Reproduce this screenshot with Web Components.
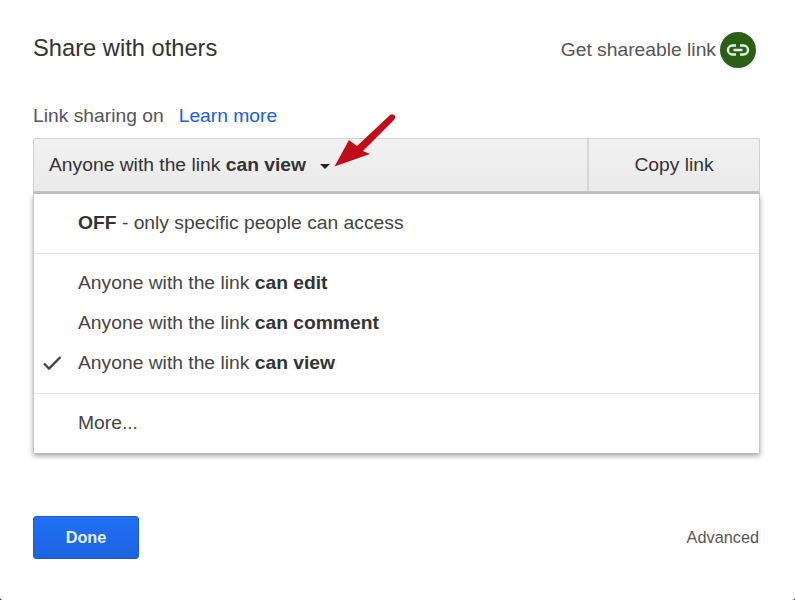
<!DOCTYPE html>
<html><head><meta charset="utf-8"><title>Share with others</title>
<style>
html,body{margin:0;padding:0;height:600px;overflow:hidden;background:#fff}
</style></head><body>
<share-dialog></share-dialog>
<template id="t-dialog">
<style>
:host{display:block;width:795px;height:600px;background:#333;font-family:"Liberation Sans",Arial,sans-serif;color:#333}
.d{box-sizing:border-box;height:600px;background:#fff;border-radius:0 0 3px 3px;padding:35px 35px 41px 33px;display:flex;flex-direction:column;position:relative}
.head{display:flex;justify-content:space-between;align-items:flex-start;height:69px}
h1{margin:-1px 0 0;font-weight:400;font-size:23.7px;line-height:28px;color:#333}
.get{display:flex;align-items:center;gap:4px;font-size:19.27px;color:#555;margin-top:-3px;margin-right:4px}
.line{font-size:19.27px;line-height:24px;color:#555;display:flex;gap:15px}
.line a{color:#1a5fdc;text-decoration:none}
.bar{margin-top:10px;display:flex;height:56px;box-sizing:border-box;border:1px solid #d0d0d0;border-bottom:3px solid #c4c4c4;background:linear-gradient(#f1f1f1,#eaeaea);border-radius:2px 2px 0 0}
.sel{flex:1;display:flex;align-items:center;padding-left:15px;font-size:19.27px;color:#333;border-right:2px solid #d6d6d6}
.caret{width:0;height:0;border:5px solid transparent;border-top:5px solid #222;border-bottom:0;margin-left:14px;margin-top:3px}
.copy{width:170px;display:flex;align-items:center;justify-content:center;font-size:19.27px;color:#333}
b{font-weight:700}
.foot{margin-top:auto;display:flex;justify-content:space-between;align-items:center;margin-right:1px}
.adv{font-size:16.3px;color:#555}
.arrow{position:absolute;left:330px;top:110px}
</style>
<div class="d">
  <div class="head"><h1>Share with others</h1><div class="get"><span>Get shareable link</span><link-badge></link-badge></div></div>
  <div class="line"><span>Link sharing on</span><a>Learn more</a></div>
  <div class="bar"><div class="sel"><span>Anyone with the link <b>can view</b></span><i class="caret"></i></div><div class="copy">Copy link</div></div>
  <share-menu></share-menu>
  <div class="foot"><done-button></done-button><span class="adv">Advanced</span></div>
  <svg class="arrow" width="70" height="60" viewBox="0 0 70 60"><path d="M4.500 56.500 L19 30 L27 36 L60 5 Q63 3 65 6 Q66 8 63 11 L33 41 L40 44 Z" fill="#c00d1a"/></svg>
</div>
</template>
<template id="t-badge">
<style>:host{display:block;width:36px;height:36px}svg{display:block}</style>
<svg width="36" height="36" viewBox="0 0 36 36"><circle cx="18" cy="18" r="18" fill="#2a5f16"/><path d="M16 13.500h-3.500a4.500 4.500 0 0 0 0 9H16M20 13.500h3.500a4.500 4.500 0 0 1 0 9H20M13.500 18h9" fill="none" stroke="#e8efe4" stroke-width="2.400"/></svg>
</template>
<template id="t-menu">
<style>
:host{display:block;background:#fff;border:1px solid #c8c8c8;border-top:0;border-bottom:0;box-shadow:0 3px 5px rgba(0,0,0,.35);font-size:19.27px;color:#444}
section{padding:9px 0 10px;border-bottom:1px solid #e4e4e4}
section:first-child{padding-bottom:9px}
section:last-child{border-bottom:0}
</style>
<section><menu-row><b>OFF</b> - only specific people can access</menu-row></section>
<section><menu-row>Anyone with the link <b>can edit</b></menu-row><menu-row>Anyone with the link <b>can comment</b></menu-row><menu-row checked>Anyone with the link <b>can view</b></menu-row></section>
<section><menu-row>More...</menu-row></section>
</template>
<template id="t-row">
<style>
:host{display:flex;align-items:center;height:40px;padding-left:44px;position:relative}
svg{position:absolute;left:8px;top:12px;display:none}
:host([checked]) svg{display:block}
::slotted(b){font-weight:700;color:#333}
</style>
<svg width="20" height="16" viewBox="0 0 20 16"><path d="M2 8.500l5 5L18.500 2" fill="none" stroke="#444" stroke-width="2.400"/></svg><span><slot></slot></span>
</template>
<template id="t-done">
<style>
:host{display:flex;align-items:center;justify-content:center;box-sizing:border-box;width:106px;height:43px;background:linear-gradient(#2170f5,#1b63e0);border:1px solid #1a5bd0;border-radius:3px;color:#e8f0ff;font-weight:700;font-size:16.3px}
</style><span>Done</span>
</template>
<script>
const def=(n,id)=>customElements.define(n,class extends HTMLElement{constructor(){super();this.attachShadow({mode:"open"}).appendChild(document.getElementById(id).content.cloneNode(true))}});
def("link-badge","t-badge");def("menu-row","t-row");def("share-menu","t-menu");def("done-button","t-done");def("share-dialog","t-dialog");
</script>
</body></html>
